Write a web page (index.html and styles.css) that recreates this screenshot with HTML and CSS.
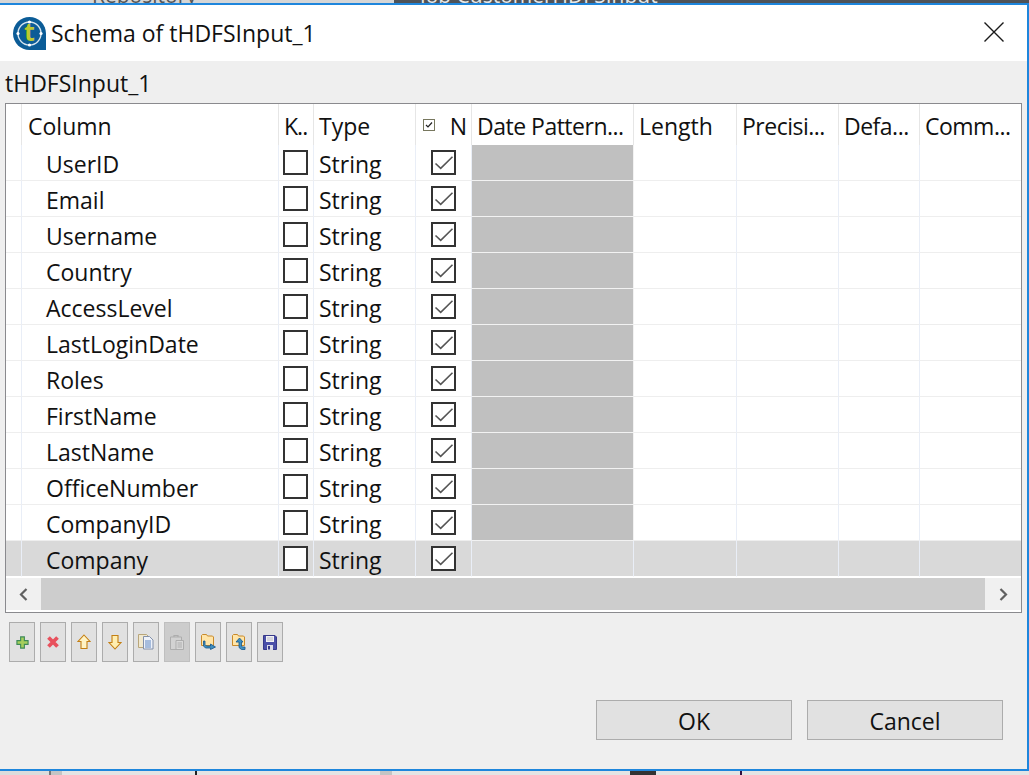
FILE: index.html
```html
<!DOCTYPE html>
<html lang="en">
  <head>
    <meta charset="UTF-8" />
    <title>Schema of tHDFSInput_1</title>
    <link rel="stylesheet" href="styles.css">
  </head>
  <body>
    <div class="behind-top">
      <div class="behind-left"><span class="behind-text">Repository</span></div>
      <div class="behind-right"><span class="behind-text">Job CustomerHDFSInput</span></div>
    </div>

    <div class="dialog">
      <div class="title-bar">
        <svg class="app-logo" width="33" height="33" viewBox="0 0 33 33">
          <path d="M16.5 0a16.5 16.5 0 0 1 16.5 16.5V33H16.5a16.5 16.5 0 0 1 0-33z" fill="#0b5c97" />
          <circle cx="16.5" cy="16.5" r="11.5" fill="none" stroke="#d5e4ee" stroke-width="1.4" />
          <circle cx="16.5" cy="5" r="1.6" fill="#fff" />
          <circle cx="16.5" cy="28" r="1.6" fill="#fff" />
          <circle cx="5" cy="16.5" r="1.6" fill="#fff" />
          <circle cx="28" cy="16.5" r="1.6" fill="#fff" />
          <text x="16.5" y="24" text-anchor="middle" class="logo-t">t</text>
        </svg>
        <div class="title-text">Schema of tHDFSInput_1</div>
        <svg class="close-x" width="20" height="20" viewBox="0 0 20 20">
          <path d="M0.5 0.5L19.5 19.5M19.5 0.5L0.5 19.5" stroke="#1a1a1a" stroke-width="1.4" fill="none" />
        </svg>
      </div>

      <div class="body">
        <div class="comp-name">tHDFSInput_1</div>

        <div class="table-box">
          <table class="schema">
            <colgroup>
              <col class="c-gutter" /><col class="c-column" /><col class="c-key" /><col class="c-type" />
              <col class="c-null" /><col class="c-date" /><col class="c-length" /><col class="c-prec" />
              <col class="c-def" /><col class="c-comm" />
            </colgroup>
            <thead>
              <tr>
                <th></th>
                <th class="first-head">Column</th>
                <th class="trunc key-head">K..</th>
                <th>Type</th>
                <th class="null-head"><span class="mini-check"><svg width="10" height="10" viewBox="0 0 10 10"><path d="M2 5l2 2 4-4.500" fill="none" stroke="#222" stroke-width="1.200" /></svg></span><span>N</span></th>
                <th class="trunc">Date Pattern...</th>
                <th>Length</th>
                <th class="trunc">Precisi...</th>
                <th class="trunc">Defa...</th>
                <th class="trunc">Comm...</th>
              </tr>
            </thead>
            <tbody id="rows"></tbody>
          </table>

          <div class="h-scroll">
            <div class="scroll-btn">
              <svg width="11" height="13" viewBox="0 0 11 13"><path d="M8.500 1L3 6.500l5.500 5.500" fill="none" stroke="#606060" stroke-width="2.200" /></svg>
            </div>
            <div class="scroll-thumb"></div>
            <div class="scroll-btn">
              <svg width="11" height="13" viewBox="0 0 11 13"><path d="M2.500 1L8 6.500 2.500 12" fill="none" stroke="#606060" stroke-width="2.200" /></svg>
            </div>
          </div>
        </div>

        <div class="toolbar">
          <button class="tool">
            <svg width="13" height="13" viewBox="0 0 14 14"><path d="M5 1h4v4h4v4H9v4H5V9H1V5h4z" fill="#a6cf5c" stroke="#3d8a58" stroke-width="1.200" /></svg>
          </button>
          <button class="tool">
            <svg width="14" height="14" viewBox="0 0 14 14"><path d="M2.500 2.500l9 9M11.500 2.500l-9 9" stroke="#e8515d" stroke-width="3.800" fill="none" /></svg>
          </button>
          <button class="tool">
            <svg width="14" height="16" viewBox="0 0 14 16"><path d="M7 1l6 6.500H10V14.500H4V7.500H1z" fill="#fff3c4" stroke="#c47f12" stroke-width="1.100" /></svg>
          </button>
          <button class="tool">
            <svg width="14" height="16" viewBox="0 0 14 16"><path d="M4 1.500h6V8.500h3L7 15 1 8.500h3z" fill="#ffeeb0" stroke="#c47f12" stroke-width="1.100" /></svg>
          </button>
          <button class="tool">
            <svg width="16" height="16" viewBox="0 0 16 16">
              <path d="M.5.500h8l2 2v11H.5z" fill="#f0e8d0" stroke="#b9a67a" />
              <path d="M5.500 2.500h6l3.500 3.500v9h-9.500z" fill="#eef2fa" stroke="#8290aa" />
              <path d="M7 7h6M7 9h6M7 11h6M7 13h6" stroke="#5f86c0" />
            </svg>
          </button>
          <button class="tool tool-off">
            <svg width="14" height="16" viewBox="0 0 14 16">
              <path d="M.5 3h11v12.500H.5z" fill="#d2d2d2" stroke="#adadad" />
              <path d="M4 3V1.500h4V3" fill="none" stroke="#adadad" stroke-width="1.200" />
              <path d="M6 6.500h7.500v9H6z" fill="#d8d8d8" stroke="#adadad" />
              <path d="M7.500 9h4.500M7.500 11h4.500M7.500 13h4.500" stroke="#adadad" />
            </svg>
          </button>
          <button class="tool">
            <svg width="15" height="16" viewBox="0 0 15 16">
              <path d="M.5 11.500V1.500l1-1h4l1 1.500h5l1 1v8.500z" fill="#ffe5a8" stroke="#c98a2a" />
              <path d="M4 7v3.500l1.500 1.500h4v-2l5 3-5 2.500v-1.500H4.500L2.500 12V7z" fill="#3f8fbf" stroke="#14568c" stroke-width=".8" />
            </svg>
          </button>
          <button class="tool">
            <svg width="15" height="16" viewBox="0 0 15 16">
              <path d="M.5 11.500V1.500l1-1h4l1 1.500h5l1 1v8.500z" fill="#ffe5a8" stroke="#c98a2a" />
              <path d="M7.500 4l3.500 4H9.500v4l1 1h2.500v2.500H9.500L7 13.500V8H4z" fill="#3f8fbf" stroke="#14568c" stroke-width=".8" />
            </svg>
          </button>
          <button class="tool">
            <svg width="14" height="15" viewBox="0 0 14 15">
              <path d="M.5.500h11.500l1.500 1.500v12.500H.5z" fill="#4a4fa8" stroke="#37398a" />
              <rect x="3" y="1" width="8" height="6" fill="#f2f2f4" />
              <path d="M4 3h6M4 5h6" stroke="#b8b8c8" />
              <rect x="4" y="10" width="6" height="5" fill="#dcdce8" />
              <rect x="5" y="11" width="2" height="3.500" fill="#37398a" />
            </svg>
          </button>
        </div>

        <div class="actions">
          <button class="action">OK</button>
          <button class="action">Cancel</button>
        </div>
      </div>
    </div>

    <div class="behind-bottom"></div>

    <script>
      const names = ["UserID", "Email", "Username", "Country", "AccessLevel", "LastLoginDate", "Roles", "FirstName", "LastName", "OfficeNumber", "CompanyID", "Company"];
      const checkMark = '<svg width="24" height="24" viewBox="0 0 24 24"><path d="M3.500 12.500L8.700 17.300 20.500 5.700" fill="none" stroke="#555" stroke-width="1.600" /></svg>';
      const body = document.getElementById("rows");

      names.forEach((name, i) => {
        const row = document.createElement("tr");
        if (i === names.length - 1) row.className = "selected";
        const dateClass = i === names.length - 1 ? "" : "date-off";
        row.innerHTML = `
          <td></td>
          <td class="name">${name}</td>
          <td class="box-cell"><span class="box"></span></td>
          <td>String</td>
          <td class="box-cell"><span class="box">${checkMark}</span></td>
          <td class="${dateClass}"></td>
          <td></td><td></td><td></td><td></td>`;
        body.appendChild(row);
      });
    </script>
  </body>
</html>
```

FILE: styles.css
```css
* {
  margin: 0;
  padding: 0;
  box-sizing: border-box;
}

html,
body {
  height: 100%;
  overflow: hidden;
}

body {
  display: flex;
  flex-direction: column;
  font-family: "Open Sans", "Noto Sans", sans-serif;
  font-size: 23px;
  color: #111;
  background-color: #8c8c8c;
}

.behind-top {
  height: 3px;
  display: flex;
  overflow: hidden;
  flex-shrink: 0;
}

.behind-left {
  width: 394px;
  background-color: #d6d6d6;
  color: #555;
  padding-left: 92px;
}

.behind-right {
  flex: 1;
  background-color: #4f5358;
  color: #e8e8e8;
  padding-left: 26px;
}

.behind-text {
  display: block;
  font-size: 21px;
  line-height: 21px;
  margin-top: -15px;
}

.behind-bottom {
  height: 4px;
  flex-shrink: 0;
  background: linear-gradient(
    to right,
    #dcdcdc 49px,
    #777 49px 51px,
    #c4c4c4 51px 62px,
    #e4e4e4 62px 195px,
    #222 195px 197px,
    #e4e4e4 197px 380px,
    #c4c4c4 380px 392px,
    #e4e4e4 392px 630px,
    #333 630px 656px,
    #e4e4e4 656px 740px,
    #301040 740px 742px,
    #e4e4e4 742px
  );
}

.dialog {
  height: 768px;
  flex-shrink: 0;
  display: flex;
  flex-direction: column;
  border-top: 2px solid #1e86dc;
  border-bottom: 2px solid #1e86dc;
  border-right: 2px solid #1e86dc;
  background-color: #efefef;
}

.title-bar {
  height: 56px;
  background-color: #fff;
  display: flex;
  align-items: center;
  padding: 0 23px 0 13px;
  flex-shrink: 0;
}

.app-logo {
  margin-right: 5px;
}

.logo-t {
  font-family: "Open Sans", sans-serif;
  font-size: 25px;
  font-weight: 700;
  fill: #bcc92e;
}

.title-text {
  flex: 1;
}

.close-x {
  margin-top: -2px;
}

.body {
  flex: 1;
  display: flex;
  flex-direction: column;
  padding: 0 5px;
}

.comp-name {
  height: 42px;
  line-height: 44px;
}

.table-box {
  height: 510px;
  width: 1017px;
  border: 1px solid #8a8a8e;
  background-color: #fff;
  display: flex;
  flex-direction: column;
}

.schema {
  table-layout: fixed;
  width: 1015px;
  border-collapse: separate;
  border-spacing: 0;
}

.c-gutter { width: 16px; }
.c-column { width: 257px; }
.c-key { width: 35px; }
.c-type { width: 102px; }
.c-null { width: 56px; }
.c-date { width: 162px; }
.c-length { width: 103px; }
.c-prec { width: 102px; }
.c-def { width: 81px; }
.c-comm { width: 101px; }

.schema th {
  height: 41px;
  font-weight: 400;
  text-align: left;
  padding: 2px 0 0 5px;
  line-height: 30px;
  white-space: nowrap;
  overflow: hidden;
  border-right: 1px solid #e6e6e6;
}

.schema th.first-head {
  padding-left: 6px;
}

.schema th.trunc {
  letter-spacing: -0.5px;
}

.schema th.key-head {
  letter-spacing: -1px;
}

.schema th:last-child,
.schema td:last-child {
  border-right: none;
}

.schema td {
  height: 36px;
  padding: 2px 0 0 5px;
  line-height: 30px;
  white-space: nowrap;
  overflow: hidden;
  border-right: 1px solid #e9eef7;
  border-bottom: 1px solid #eeeeee;
}

.schema td.name {
  padding-left: 24px;
}

.schema td.box-cell {
  padding: 5px 0 0 4px;
  vertical-align: top;
}

.schema th.null-head {
  display: flex;
  align-items: center;
  justify-content: space-between;
  padding-left: 7px;
  padding-right: 4px;
}

.mini-check {
  width: 12px;
  height: 12px;
  margin-top: -2px;
  border: 1px solid #77775e;
  display: flex;
  align-items: center;
  justify-content: center;
}

.box {
  display: block;
  width: 25px;
  height: 25px;
  border: 2px solid #333;
  background-color: #fff;
}

.box svg {
  display: block;
  margin: -1px;
}

.schema td.date-off {
  background-color: #c0c0c0;
  border-bottom-color: #f2f2f2;
  border-right-color: #f2f2f2;
}

.selected td {
  background-color: #d9d9d9;
  border-bottom-color: #fff;
}

.schema .box-cell:nth-child(5) {
  padding-left: 15px;
}

.h-scroll {
  height: 32px;
  margin-top: 1px;
  display: flex;
  background-color: #f0f0f0;
}

.scroll-btn {
  width: 35px;
  flex-shrink: 0;
  display: flex;
  align-items: center;
  justify-content: center;
}

.scroll-btn:last-child {
  width: 36px;
}

.scroll-thumb {
  flex: 1;
  background-color: #cdcdcd;
}

.toolbar {
  display: flex;
  gap: 5px;
  padding: 9px 0 0 4px;
}

.tool {
  width: 26px;
  height: 40px;
  border: 1px solid #acacac;
  background-color: #e1e1e1;
  display: flex;
  align-items: center;
  justify-content: center;
}

.tool-off {
  background-color: #cccccc;
  border-color: #bfbfbf;
}

.actions {
  display: flex;
  gap: 15px;
  padding: 38px 0 0 591px;
}

.action {
  width: 196px;
  height: 40px;
  padding-top: 1px;
  border: 1px solid #acacac;
  background-color: #e1e1e1;
  font-family: inherit;
  font-size: 23px;
  color: #111;
}
```
